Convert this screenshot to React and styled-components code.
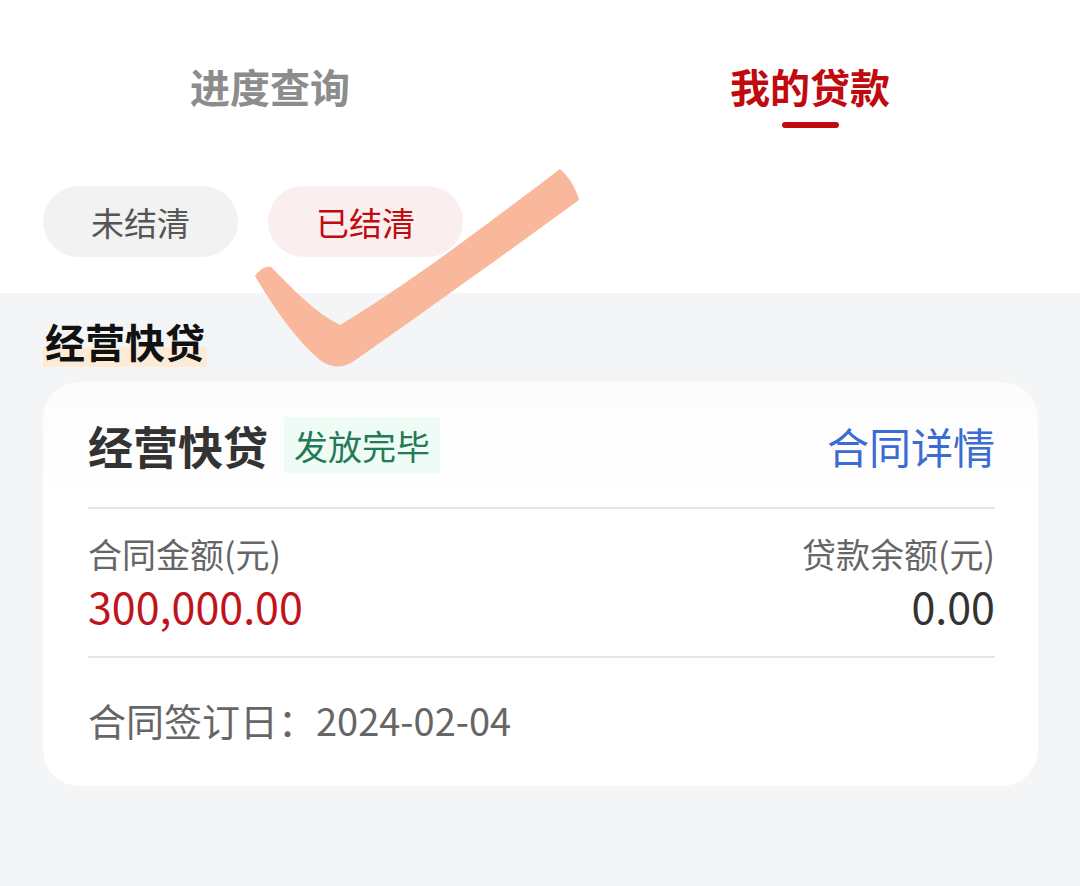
import React from 'react';
import styled, { createGlobalStyle } from 'styled-components';

const GlobalStyle = createGlobalStyle`
  html, body {
    margin: 0;
    padding: 0;
    background: #f4f5f7;
  }
  body {
    font-family: "Noto Sans CJK SC", "Noto Sans", sans-serif;
  }
`;

const Page = styled.div`
  position: relative;
  width: 1080px;
  height: 886px;
  overflow: hidden;
  background: #f4f5f7;
`;

const Header = styled.div`
  background: #fff;
  padding-top: 56px;
  height: 237px;
  box-sizing: content-box;
`;

const Tabs = styled.div`
  display: flex;
`;

const Tab = styled.div`
  flex: 1;
  display: flex;
  flex-direction: column;
  align-items: center;
  font-size: 40px;
  line-height: 60px;
  font-weight: 700;
  color: ${p => (p.active ? '#c00a0e' : '#8c8c8c')};

  &::after {
    content: '';
    display: block;
    margin-top: 6px;
    width: 57px;
    height: 6px;
    border-radius: 3px;
    background: ${p => (p.active ? '#c00a0e' : 'transparent')};
  }
`;

const Pills = styled.div`
  display: flex;
  gap: 30px;
  padding: 58px 0 0 43px;
`;

const Pill = styled.div`
  width: 195px;
  height: 71px;
  border-radius: 36px;
  display: flex;
  align-items: center;
  justify-content: center;
  font-size: 33px;
  background: ${p => (p.active ? '#fbeeee' : '#f2f2f2')};
  color: ${p => (p.active ? '#c00a0e' : '#555')};
`;

const Body = styled.div`
  padding: 22px 42px 0 43px;
`;

const SectionTitle = styled.div`
  display: inline-block;
  font-size: 40px;
  font-weight: 700;
  line-height: 52px;
  color: #111;
  padding: 0 2px;
  background: linear-gradient(to bottom, transparent 62%, #fdebd8 62%);
`;

const Card = styled.div`
  margin-top: 15px;
  background: linear-gradient(to bottom, #fcfcfc, #ffffff 30%);
  border-radius: 36px;
  padding: 34px 43px 41px 45px;
`;

const CardHead = styled.div`
  display: flex;
  align-items: center;
  height: 58px;
  padding-bottom: 33px;
  border-bottom: 2px solid #e6e6e6;
`;

const LoanName = styled.div`
  font-size: 45px;
  font-weight: 700;
  color: #333;
`;

const Badge = styled.div`
  margin-left: 16px;
  padding: 0 10px;
  height: 56px;
  display: flex;
  align-items: center;
  font-size: 34px;
  color: #237a56;
  background: #effbf5;
`;

const DetailLink = styled.div`
  margin-left: auto;
  font-size: 42px;
  color: #3a6cd1;
`;

const Amounts = styled.div`
  display: flex;
  justify-content: space-between;
  padding: 21px 0 24px;
  border-bottom: 2px solid #e6e6e6;
`;

const AmountCol = styled.div`
  display: flex;
  flex-direction: column;
  align-items: ${p => (p.right ? 'flex-end' : 'flex-start')};
`;

const Label = styled.div`
  font-size: 34px;
  line-height: 48px;
  color: #666;
`;

const Amount = styled.div`
  font-size: 43px;
  line-height: 54px;
  color: ${p => (p.red ? '#c0141c' : '#333')};
`;

const SignDate = styled.div`
  padding-top: 37px;
  font-size: 38px;
  line-height: 50px;
  color: #666;
`;

const Check = styled.svg`
  position: absolute;
  left: 0;
  top: 0;
  pointer-events: none;
`;

export default function App() {
  return (
    <Page>
      <GlobalStyle />
      <Header>
        <Tabs>
          <Tab>进度查询</Tab>
          <Tab active>我的贷款</Tab>
        </Tabs>
        <Pills>
          <Pill>未结清</Pill>
          <Pill active>已结清</Pill>
        </Pills>
      </Header>
      <Body>
        <SectionTitle>经营快贷</SectionTitle>
        <Card>
          <CardHead>
            <LoanName>经营快贷</LoanName>
            <Badge>发放完毕</Badge>
            <DetailLink>合同详情</DetailLink>
          </CardHead>
          <Amounts>
            <AmountCol>
              <Label>合同金额(元)</Label>
              <Amount red>300,000.00</Amount>
            </AmountCol>
            <AmountCol right>
              <Label>贷款余额(元)</Label>
              <Amount>0.00</Amount>
            </AmountCol>
          </Amounts>
          <SignDate>合同签订日：2024-02-04</SignDate>
        </Card>
      </Body>
      <Check width="1080" height="886" viewBox="0 0 1080 886">
        <path
          d="M255 276 C260 269 266 266 271 267 C292 288 314 312 340 325 C402 288 472 236 560 169 C569 177 576 188 579 200 C502 256 424 312 354 361 C342 369 330 368 320 360 C296 340 274 308 255 276 Z"
          fill="#f9b79b"
        />
      </Check>
    </Page>
  );
}
